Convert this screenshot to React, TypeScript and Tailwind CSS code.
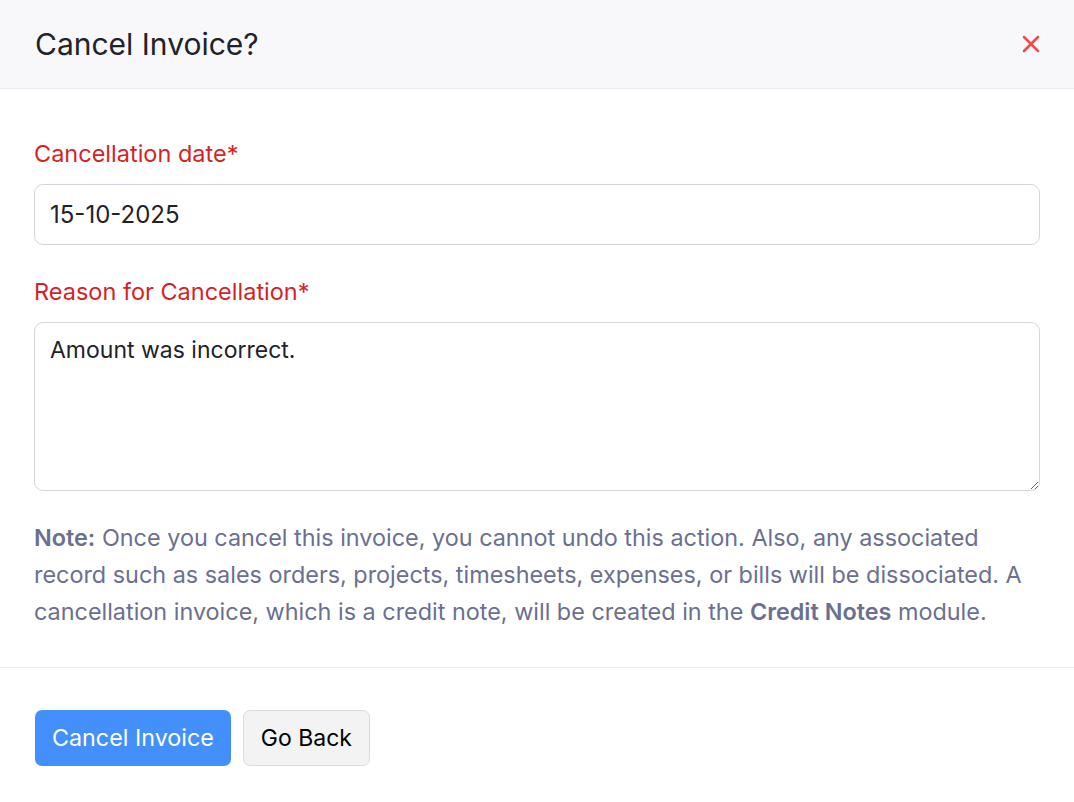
import { X } from 'lucide-react';

export default function App() {
  return (
    <div className="min-h-screen w-full bg-white font-['Inter',sans-serif]">
      {/* Header */}
      <div className="flex h-[89px] items-center justify-between border-b border-[#ebebef] bg-[#f8f8fa] pl-[35px] pr-[29px]">
        <h1 className="text-[30px] font-normal text-[#21232a]">Cancel Invoice?</h1>
        <button className="text-[#f24b4b]">
          <X size={28} strokeWidth={2.2} />
        </button>
      </div>

      {/* Body */}
      <div className="px-[34px] pt-[50px] pb-[37px] border-b border-[#ebebef]">
        <label className="block text-[23.5px] leading-[30px] text-[#d61f26] mb-[15px]">Cancellation date*</label>
        <input
          defaultValue="15-10-2025"
          className="w-full h-[61px] rounded-[9px] border border-[#d5d5e0] px-[15px] text-[24px] text-[#21232a] outline-none"
        />

        <label className="block text-[23.5px] leading-[30px] text-[#d61f26] mt-[32px] mb-[15px]">Reason for Cancellation*</label>
        <textarea
          defaultValue="Amount was incorrect."
          className="block w-full h-[169px] rounded-[9px] border border-[#d5d5e0] px-[15px] py-[10px] text-[23px] text-[#21232a] outline-none resize-y"
        />

        <p className="mt-[28px] text-[23.4px] leading-[37px] text-[#6b7090]">
          <span className="font-semibold">Note:</span> Once you cancel this invoice, you cannot undo this action. Also, any associated record such as sales orders, projects, timesheets, expenses, or bills will be dissociated. A cancellation invoice, which is a credit note, will be created in the <span className="font-semibold">Credit Notes</span> module.
        </p>
      </div>

      {/* Footer */}
      <div className="flex gap-[12px] px-[35px] pt-[42px]">
        <button className="h-[56px] rounded-[7px] bg-[#438ffb] px-[17px] text-[23.3px] text-white">Cancel Invoice</button>
        <button className="h-[56px] rounded-[7px] border border-[#dcdcdc] bg-[#f3f3f3] px-[17px] text-[23px] text-black">Go Back</button>
      </div>
    </div>
  );
}
